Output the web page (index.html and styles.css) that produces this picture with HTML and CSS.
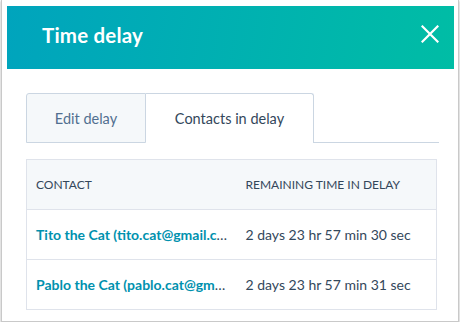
FILE: index.html
```html
<!DOCTYPE html>
<html>
<head>
<meta charset="utf-8">
<link rel="stylesheet" href="styles.css">
</head>
<body>
<div class="modal">
  <div class="header">
    <h1 class="title">Time delay</h1>
    <svg class="close" width="18" height="18" viewBox="0 0 18 18"><path d="M1.5 1.5L16.5 16.5M16.5 1.5L1.5 16.5" stroke="#fff" stroke-width="2.2" stroke-linecap="square" fill="none"/></svg>
  </div>
  <div class="content">
    <div class="tabs">
      <div class="tab">Edit delay</div>
      <div class="tab active">Contacts in delay</div>
      <div class="tab-fill"></div>
    </div>
    <table class="table">
      <colgroup><col class="col1"><col class="col2"></colgroup>
      <thead>
        <tr><th>Contact</th><th>Remaining time in delay</th></tr>
      </thead>
      <tbody>
        <tr><td><a class="link">Tito the Cat (tito.cat@gmail.com)</a></td><td>2 days 23 hr 57 min 30 sec</td></tr>
        <tr><td><a class="link">Pablo the Cat (pablo.cat@gmail.com)</a></td><td>2 days 23 hr 57 min 31 sec</td></tr>
      </tbody>
    </table>
  </div>
</div>
</body>
</html>
```
FILE: styles.css
```css
html, body { margin: 0; padding: 0; background: #fff; }
body { font-family: Lato, "Open Sans", sans-serif; color: #33475b; }
.modal {
  margin-left: 1px;
  box-sizing: border-box;
  width: 458px;
  height: 322px;
  border: 1px solid #c9c9c9;
  border-top: none;
  box-shadow: 0 1px 2px rgba(0,0,0,0.35);
  padding: 6px 4px 0 5px;
}
.header {
  height: 63px;
  background: linear-gradient(100deg, #00a4bd 0%, #00bda5 100%);
  display: flex;
  align-items: center;
  justify-content: space-between;
  padding: 0 15px 0 35px;
}
.title { margin: 0; color: #fff; font-size: 20.5px; font-weight: 700; letter-spacing: 0.2px; padding-bottom: 5px; }
.close { display: block; margin-top: -8px; }
.content { padding: 24px 16px 0 19px; }
.tabs { display: flex; height: 50px; }
.tab {
  box-sizing: border-box;
  height: 50px;
  display: flex; align-items: center; justify-content: center;
  font-size: 14.5px;
  border: 1px solid #cbd6e2;
}
.tab:first-child { width: 120px; background: #f5f8fa; border-top-left-radius: 3px; color: #516f90; }
.tab.active { width: 168px; background: #fff; border-left: none; border-bottom: none; border-top-right-radius: 3px; color: #33475b; }
.tab-fill { flex: 1; border-bottom: 1px solid #cbd6e2; margin-right: -1px; }
.table {
  margin-top: 16px;
  width: 411px;
  border-collapse: collapse;
  table-layout: fixed;
  border: 1px solid #dfe3eb;
}
.col1 { width: 210px; }
th, td { height: 49px; padding: 0 9px; text-align: left; border-top: 1px solid #dfe3eb; white-space: nowrap; overflow: hidden; text-overflow: ellipsis; }
th { background: #f5f8fa; font-size: 12px; font-weight: 400; text-transform: uppercase; color: #33475b; }
td { font-size: 14px; color: #33475b; }
.link { color: #0091ae; font-weight: 700; }
```
